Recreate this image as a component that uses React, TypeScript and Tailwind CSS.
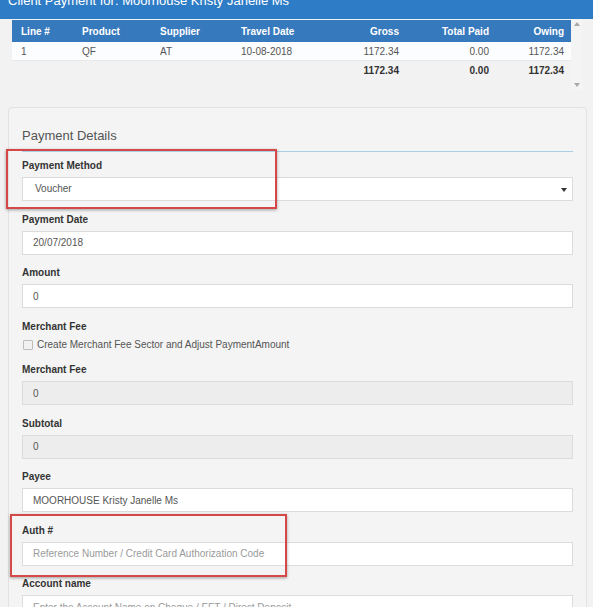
import React from 'react';

const cols = 'grid grid-cols-[61px_78px_81px_98px_76px_90px_75px]';

function Label({ children }: { children: React.ReactNode }) {
  return <div className="text-[10px] font-bold leading-[14px] text-[#333] mb-[4px]">{children}</div>;
}

function Field({ value, placeholder, disabled }: { value?: string; placeholder?: string; disabled?: boolean }) {
  return (
    <input
      readOnly
      defaultValue={value}
      placeholder={placeholder}
      className={`block w-full h-[24px] border border-[#dcdcdc] pl-[10px] text-[10px] text-[#555] placeholder:text-[#9a9a9a] outline-none ${
        disabled ? 'bg-[#ededed]' : 'bg-white'
      }`}
    />
  );
}

function Group({ label, children }: { label: string; children: React.ReactNode }) {
  return (
    <div className="mb-[11.5px]">
      <Label>{label}</Label>
      {children}
    </div>
  );
}

export default function App() {
  return (
    <div className="relative w-[593px] h-[607px] overflow-hidden bg-[#f2f2f2] font-['Liberation_Sans',Arial,sans-serif]">
      {/* title bar, cut at the top */}
      <div className="h-[19px] bg-[#2f7cc6] overflow-hidden px-[8px]">
        <div className="-mt-[6px] text-[13px] leading-[13px] text-white whitespace-nowrap">
          Client Payment for: Moorhouse Kristy Janelle Ms
        </div>
      </div>

      {/* lines table with scrollbar */}
      <div className="flex h-[71px] pl-[12px]">
        <div className="w-[559px] pt-[1px]">
          <div className={`${cols} h-[22px] items-center bg-[#3779bd] text-[10px] font-bold text-white`}>
            <div className="pl-[9px]">Line #</div>
            <div className="pl-[9px]">Product</div>
            <div className="pl-[9px]">Supplier</div>
            <div className="pl-[9px]">Travel Date</div>
            <div className="pr-[7px] text-right">Gross</div>
            <div className="pr-[7px] text-right">Total Paid</div>
            <div className="pr-[7px] text-right">Owing</div>
          </div>
          <div className={`${cols} h-[19px] items-center bg-[#fcfdff] border-b border-[#e8e8e8] text-[10px] text-[#555]`}>
            <div className="pl-[9px]">1</div>
            <div className="pl-[9px]">QF</div>
            <div className="pl-[9px]">AT</div>
            <div className="pl-[9px]">10-08-2018</div>
            <div className="pr-[7px] text-right">1172.34</div>
            <div className="pr-[7px] text-right">0.00</div>
            <div className="pr-[7px] text-right">1172.34</div>
          </div>
          <div className={`${cols} h-[19px] items-center text-[10px] font-bold text-[#333]`}>
            <div />
            <div />
            <div />
            <div />
            <div className="pr-[7px] text-right">1172.34</div>
            <div className="pr-[7px] text-right">0.00</div>
            <div className="pr-[7px] text-right">1172.34</div>
          </div>
        </div>
        <div className="w-[12px] flex flex-col items-center justify-between pt-[3px] pb-[3px] bg-[#f4f4f4]">
          <svg width="6" height="4" viewBox="0 0 6 4"><path d="M3 0L6 4H0z" fill="#a8a8a8" /></svg>
          <svg width="6" height="4" viewBox="0 0 6 4"><path d="M0 0H6L3 4z" fill="#a8a8a8" /></svg>
        </div>
      </div>

      {/* payment details panel */}
      <div className="mt-[17px] ml-[8px] mr-[6px] h-[520px] rounded-[4px] border border-[#e2e2e2] bg-[#f4f4f4] px-[13px]">
        <div className="pt-[20px] pb-[7px] border-b border-[#a9cfe4] text-[13px] leading-[16px] text-[#555]">
          Payment Details
        </div>
        <div className="pt-[7px]">
          <Group label="Payment Method">
            <div className="relative h-[24px] border border-[#dcdcdc] bg-white pl-[12px] text-[10px] leading-[22px] text-[#555]">
              Voucher
              <svg className="absolute right-[5px] top-[10px]" width="6" height="4" viewBox="0 0 6 4">
                <path d="M0 0H6L3 4z" fill="#333" />
              </svg>
            </div>
          </Group>
          <Group label="Payment Date">
            <Field value="20/07/2018" />
          </Group>
          <Group label="Amount">
            <Field value="0" />
          </Group>
          <div className="mb-[11.5px]">
            <div className="text-[10px] font-bold leading-[14px] text-[#333]">Merchant Fee</div>
            <div className="mt-[4px] flex items-center h-[14px] gap-[4px] pl-[1px] text-[10px] text-[#555]">
              <span className="w-[10px] h-[10px] rounded-[1px] border border-[#bdbdbd] bg-[#f1f1f1]" />
              <span>Create Merchant Fee Sector and Adjust PaymentAmount</span>
            </div>
          </div>
          <Group label="Merchant Fee">
            <Field value="0" disabled />
          </Group>
          <Group label="Subtotal">
            <Field value="0" disabled />
          </Group>
          <Group label="Payee">
            <Field value="MOORHOUSE Kristy Janelle Ms" />
          </Group>
          <Group label="Auth #">
            <Field placeholder="Reference Number / Credit Card Authorization Code" />
          </Group>
          <Group label="Account name">
            <Field placeholder="Enter the Account Name on Cheque / EFT / Direct Deposit" />
          </Group>
        </div>
      </div>

      {/* red annotation boxes */}
      <div className="absolute left-[6px] top-[149px] w-[271px] h-[60px] border-2 border-[#d64848] shadow-[0_1px_3px_rgba(0,0,0,0.35)]" />
      <div className="absolute left-[10px] top-[514px] w-[277px] h-[63px] border-2 border-[#d64848] shadow-[0_1px_3px_rgba(0,0,0,0.35)]" />
    </div>
  );
}
